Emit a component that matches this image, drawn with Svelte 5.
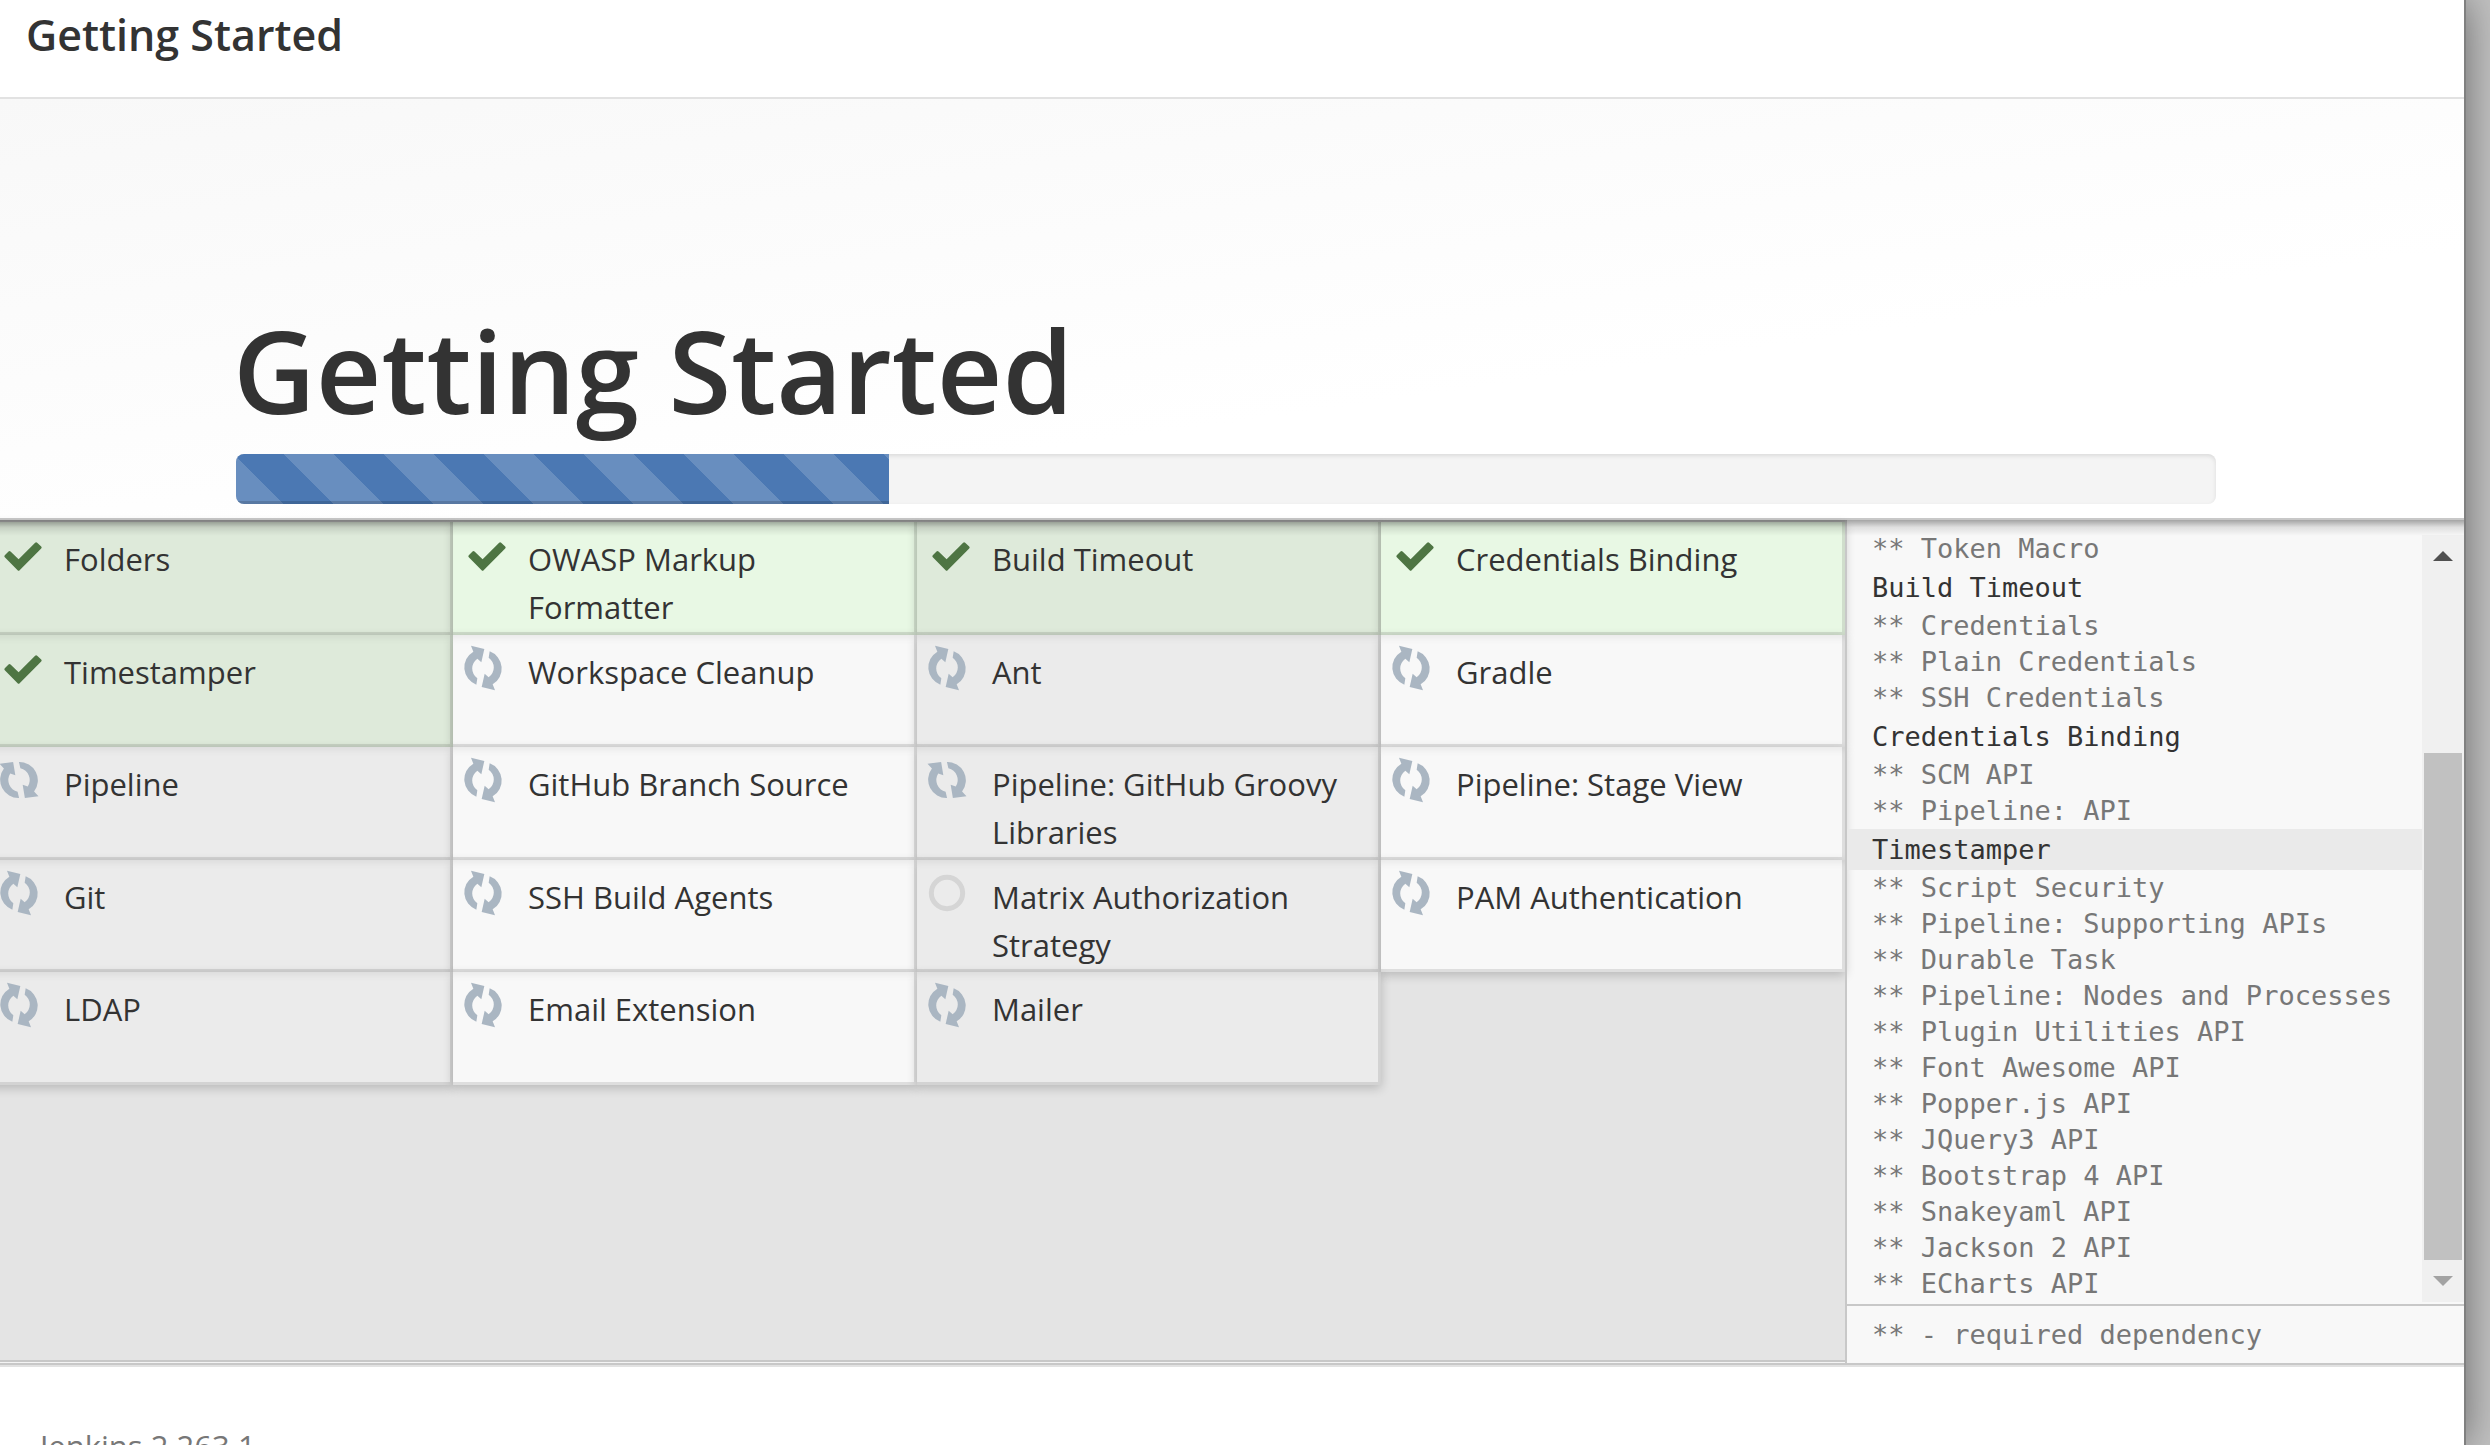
<script lang="ts">
  type Status = 'success' | 'installing' | 'pending';
  type Plugin = { name: string; status: Status; turned?: boolean };

  const plugins: Plugin[] = [
    { name: 'Folders', status: 'success' },
    { name: 'OWASP Markup Formatter', status: 'success' },
    { name: 'Build Timeout', status: 'success' },
    { name: 'Credentials Binding', status: 'success' },
    { name: 'Timestamper', status: 'success' },
    { name: 'Workspace Cleanup', status: 'installing' },
    { name: 'Ant', status: 'installing' },
    { name: 'Gradle', status: 'installing' },
    { name: 'Pipeline', status: 'installing', turned: true },
    { name: 'GitHub Branch Source', status: 'installing' },
    { name: 'Pipeline: GitHub Groovy Libraries', status: 'installing', turned: true },
    { name: 'Pipeline: Stage View', status: 'installing' },
    { name: 'Git', status: 'installing' },
    { name: 'SSH Build Agents', status: 'installing' },
    { name: 'Matrix Authorization Strategy', status: 'pending' },
    { name: 'PAM Authentication', status: 'installing' },
    { name: 'LDAP', status: 'installing' },
    { name: 'Email Extension', status: 'installing' },
    { name: 'Mailer', status: 'installing' }
  ];

  const log = [
    '** Token Macro',
    'Build Timeout',
    '** Credentials',
    '** Plain Credentials',
    '** SSH Credentials',
    'Credentials Binding',
    '** SCM API',
    '** Pipeline: API',
    'Timestamper',
    '** Script Security',
    '** Pipeline: Supporting APIs',
    '** Durable Task',
    '** Pipeline: Nodes and Processes',
    '** Plugin Utilities API',
    '** Font Awesome API',
    '** Popper.js API',
    '** JQuery3 API',
    '** Bootstrap 4 API',
    '** Snakeyaml API',
    '** Jackson 2 API',
    '** ECharts API'
  ];
  const current = 'Timestamper';
  const progress = 33;
  const arrow =
    'M-20 50A55 55 0 0 1-29-49L-36-67L4-57L-5-17L-17-28A36 36 0 0 0-17 31Z';
</script>

<div class="page">
  <div class="dialog">
    <header class="bar"><h4>Getting Started</h4></header>

    <section class="hero">
      <h1>Getting Started</h1>
      <div class="progress" role="progressbar" aria-label="Installation progress" aria-valuenow={progress} aria-valuemin="0" aria-valuemax="100">
        <div class="fill" style:width="{progress}%"></div>
      </div>
    </section>

    <section class="install">
      <div class="board">
        <ul class="grid">
          {#each plugins as p}
            <li class={p.status}>
              <span class="icon">
                {#if p.status === 'success'}
                  <svg class="check" viewBox="0 0 112 86" aria-hidden="true">
                    <path d="M2 39L13 28Q16 25 19 28L43 51L92 2Q95-1 98 2L110 13Q113 16 110 19L46 84Q43 87 40 84L2 45Q-1 42 2 39Z" />
                  </svg>
                {:else if p.status === 'installing'}
                  <svg class="sync" class:turned={p.turned} viewBox="-66 -66 132 132" aria-hidden="true">
                    <path d={arrow} />
                    <path d={arrow} transform="rotate(180)" />
                  </svg>
                {:else}
                  <svg class="wait" viewBox="-66 -66 132 132" aria-hidden="true">
                    <circle r="47" />
                  </svg>
                {/if}
              </span>
              <span class="name">{p.name}</span>
            </li>
          {/each}
        </ul>
      </div>

      <aside class="console">
        <div class="scroller">
          <div class="lines">
            {#each log as line}
              <div class:dep={line.startsWith('**')} class:head={!line.startsWith('**')} class:current={line === current}>{line}</div>
            {/each}
          </div>
          <div class="track">
            <button class="up" aria-label="Scroll up"><svg viewBox="0 0 20 10"><path d="M0 10L10 0L20 10Z" /></svg></button>
            <div class="thumb"></div>
            <button class="down" aria-label="Scroll down"><svg viewBox="0 0 20 10"><path d="M0 0L10 10L20 0Z" /></svg></button>
          </div>
        </div>
        <div class="note">** - required dependency</div>
      </aside>
    </section>

    <footer>Jenkins 2.263.1</footer>
  </div>
</div>

<style>
  :global(body) {
    margin: 0;
    overflow: hidden;
  }
  .page {
    height: 100vh;
    box-sizing: border-box;
    padding-right: 26px;
    overflow: hidden;
    background: #c2c2c2;
    font-family: 'Open Sans', 'Noto Sans', sans-serif;
    color: #333;
  }
  .dialog {
    height: 100%;
    display: flex;
    flex-direction: column;
    background: #fff;
    box-shadow: 0 0 0 2px #808080, 0 0 40px rgba(0, 0, 0, 0.5);
  }
  .bar {
    flex: none;
    height: 97px;
    border-bottom: 2px solid #e2e2e2;
    padding-left: 26px;
  }
  h4 {
    margin: 0;
    font-size: 43px;
    line-height: 70px;
    font-weight: 600;
  }
  .hero {
    flex: none;
    padding: 189px 248px 14px 236px;
    background: linear-gradient(172deg, #f8f8f8, #fff 65%);
  }
  h1 {
    margin: 0 0 3px -3px;
    font-size: 114px;
    line-height: 163px;
    font-weight: 600;
  }
  .progress {
    height: 50px;
    border-radius: 8px;
    overflow: hidden;
    background: #f4f4f4;
    box-shadow: inset 0 2px 4px rgba(0, 0, 0, 0.1);
  }
  .fill {
    height: 100%;
    background-color: #4b78b3;
    background-image: linear-gradient(45deg, rgba(255, 255, 255, 0.16) 25%, transparent 25%, transparent 50%, rgba(255, 255, 255, 0.16) 50%, rgba(255, 255, 255, 0.16) 75%, transparent 75%);
    background-size: 100px 100px;
    background-position: 48px 0;
    box-shadow: inset 0 -3px 0 rgba(0, 0, 0, 0.15);
  }
  .install {
    flex: none;
    position: relative;
    display: flex;
    border-top: 2px solid #c8c8c8;
    border-bottom: 2px solid #e2e2e2;
    background: #f8f8f8;
  }
  .install::after {
    content: '';
    position: absolute;
    inset: 0 0 auto;
    height: 16px;
    background: linear-gradient(rgba(0, 0, 0, 0.34), rgba(0, 0, 0, 0.1) 45%, transparent);
    pointer-events: none;
  }
  .board {
    flex: 1;
    padding-top: 2px;
    background: #e4e4e4;
    border-bottom: 2px solid #c8c8c8;
    margin-bottom: 3px;
    box-shadow: 0 1px #f4f4f4, 0 3px #c8c8c8, inset 0 2px #c8c8c8;
  }
  .grid {
    list-style: none;
    margin: 0 0 0 -11px;
    padding: 0;
    display: grid;
    grid-template-columns: repeat(4, 1fr);
    grid-template-rows: 113px 112px 113px 112px 113px;
  }
  li {
    display: flex;
    background: #f8f8f8;
    box-shadow: inset -3px -3px rgba(0, 0, 0, 0.1), inset 0 8px 8px -6px rgba(0, 0, 0, 0.08), 0 3px 10px rgba(0, 0, 0, 0.2);
  }
  li:nth-child(odd) {
    background: #ebebeb;
  }
  li.success {
    background: #e8f8e4;
  }
  li.success:nth-child(odd) {
    background: #deeada;
  }
  .icon {
    flex: none;
    width: 67px;
    padding: 11px 0 0 8px;
  }
  .icon svg {
    display: block;
    width: 44px;
    height: 44px;
    overflow: visible;
  }
  .icon .check {
    width: 38px;
    height: 29px;
    margin: 9px 0 0 7px;
    fill: #4e7543;
  }
  .sync {
    fill: #aab6c2;
  }
  .sync.turned {
    transform: rotate(-22deg);
  }
  .wait {
    fill: none;
    stroke: #d5d5d5;
    stroke-width: 15;
  }
  .name {
    padding: 13px 24px 0 0;
    font-size: 31px;
    line-height: 48px;
  }
  .console {
    flex: none;
    width: 617px;
    border-left: 2px solid #c8c8c8;
    border-bottom: 2px solid #c8c8c8;
    padding-top: 11px;
    font-family: 'DejaVu Sans Mono', monospace;
    font-size: 27px;
    color: #777;
  }
  .scroller {
    display: flex;
    padding-bottom: 2px;
    border-bottom: 2px solid #c8c8c8;
  }
  .lines {
    flex: 1;
    white-space: nowrap;
  }
  .dep,
  .head {
    padding-left: 25px;
  }
  .dep {
    line-height: 36px;
  }
  .head {
    line-height: 41px;
    color: #333;
  }
  .current {
    background: #eaeaea;
  }
  .track {
    width: 42px;
    margin-top: 4px;
    display: flex;
    flex-direction: column;
    background: #f0f0f0;
  }
  button {
    height: 42px;
    border: 0;
    padding: 0 11px;
    background: none;
  }
  button svg {
    display: block;
    width: 20px;
    height: 10px;
  }
  .up {
    fill: #505050;
  }
  .down {
    fill: #a3a3a3;
  }
  .thumb {
    height: 507px;
    margin: auto 2px 0;
    background: #c1c1c1;
  }
  .note {
    padding: 7px 0 7px 25px;
    line-height: 43px;
  }
  footer {
    flex: 1;
    min-height: 0;
    overflow: hidden;
    padding: 57px 0 0 40px;
    font-size: 31px;
    line-height: 44px;
    color: #777;
  }
</style>
